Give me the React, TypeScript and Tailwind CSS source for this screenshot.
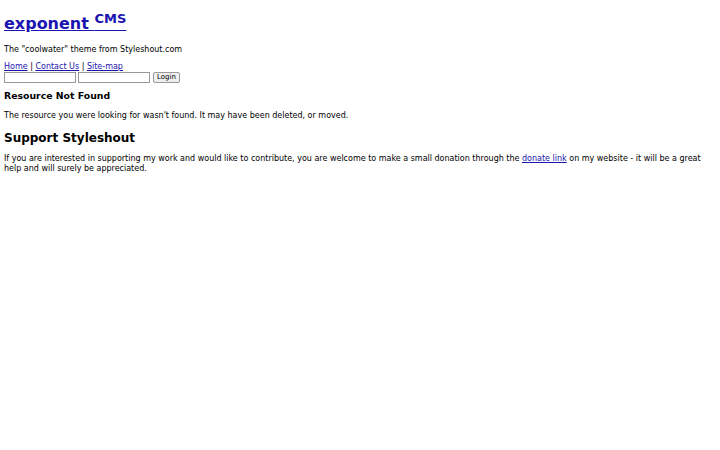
import React from "react";

export default function App() {
  return (
    <div
      className="min-h-[450px] bg-white px-1 text-[8px] leading-[10px] text-black"
      style={{ fontFamily: '"DejaVu Sans", sans-serif' }}
    >
      {/* Header */}
      <h1 className="pt-[13px] text-[16px] font-bold leading-[22px]">
        <a href="#" className="text-[#1a14b0] underline">
          exponent <sup className="text-[13px]">CMS</sup>
        </a>
      </h1>
      <p className="mt-[10px]">The "coolwater" theme from Styleshout.com</p>

      {/* Nav */}
      <div className="mt-[7px]">
        <a href="#" className="text-[#1a14b0] underline">Home</a> |{" "}
        <a href="#" className="text-[#1a14b0] underline">Contact Us</a> |{" "}
        <a href="#" className="text-[#1a14b0] underline">Site-map</a>
      </div>
      <form className="flex items-center gap-[2px]">
        <input className="h-[11px] w-[72px] border border-[#999] bg-white" />
        <input className="h-[11px] w-[72px] border border-[#999] bg-white" />
        <button
          type="button"
          className="ml-[1px] h-[11px] rounded-[2px] border border-[#999] bg-[#efefef] px-[3px] text-[7px] leading-[9px]"
        >
          Login
        </button>
      </form>

      {/* Content */}
      <h2 className="mt-[7px] text-[9.33px] font-bold leading-[12px]">Resource Not Found</h2>
      <p className="mt-[9px]">
        The resource you were looking for wasn't found. It may have been deleted, or moved.
      </p>

      <h2 className="mt-[10px] text-[12px] font-bold leading-[15px]">Support Styleshout</h2>
      <p className="mt-[8px]">
        If you are interested in supporting my work and would like to contribute, you are welcome to make a small donation through the{" "}
        <a href="#" className="text-[#1a14b0] underline">donate link</a> on my website - it will be a great help and will surely be appreciated.
      </p>
    </div>
  );
}
